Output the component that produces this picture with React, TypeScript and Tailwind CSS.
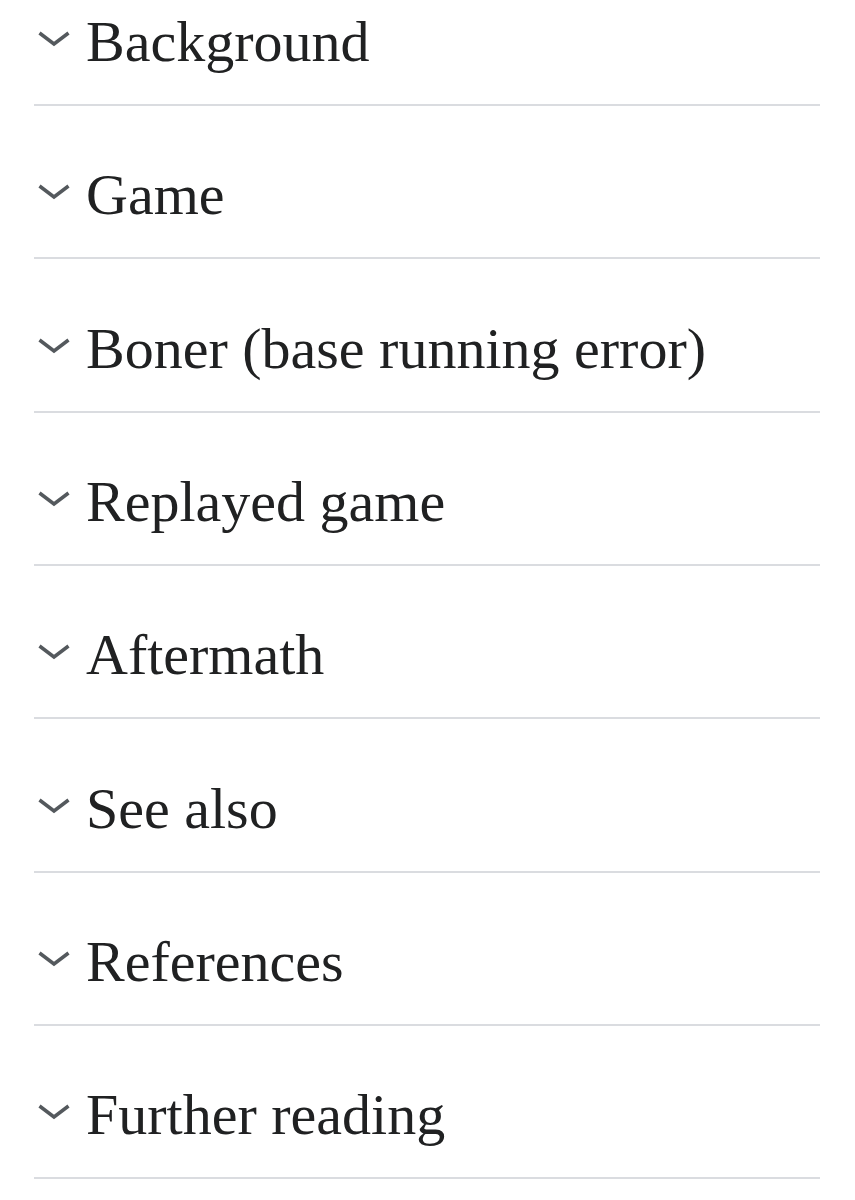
const sections = [
  "Background",
  "Game",
  "Boner (base running error)",
  "Replayed game",
  "Aftermath",
  "See also",
  "References",
  "Further reading",
];

const Chevron = () => (
  <svg
    width="34"
    height="16"
    viewBox="0 0 34 16"
    fill="none"
    className="shrink-0 mb-[6px]"
  >
    <polyline
      points="2.5,2 17,13 31.5,2"
      stroke="#54595d"
      strokeWidth="3.5"
      strokeLinejoin="miter"
    />
  </svg>
);

export default function App() {
  return (
    <div className="min-h-[1200px] bg-white overflow-hidden">
      <div className="-mt-[47.33px] pl-[34px] pr-[35px]">
        {sections.map((title) => (
          <div
            key={title}
            className="h-[153.33px] border-b-2 border-[#dadce0] flex items-end pb-[33px]"
          >
            <div className="flex items-center pl-[3px]">
              <Chevron />
              <h2 className="ml-[15px] font-['Liberation_Serif',serif] text-[58px] leading-none text-[#202122] font-normal whitespace-nowrap">
                {title}
              </h2>
            </div>
          </div>
        ))}
      </div>
    </div>
  );
}
